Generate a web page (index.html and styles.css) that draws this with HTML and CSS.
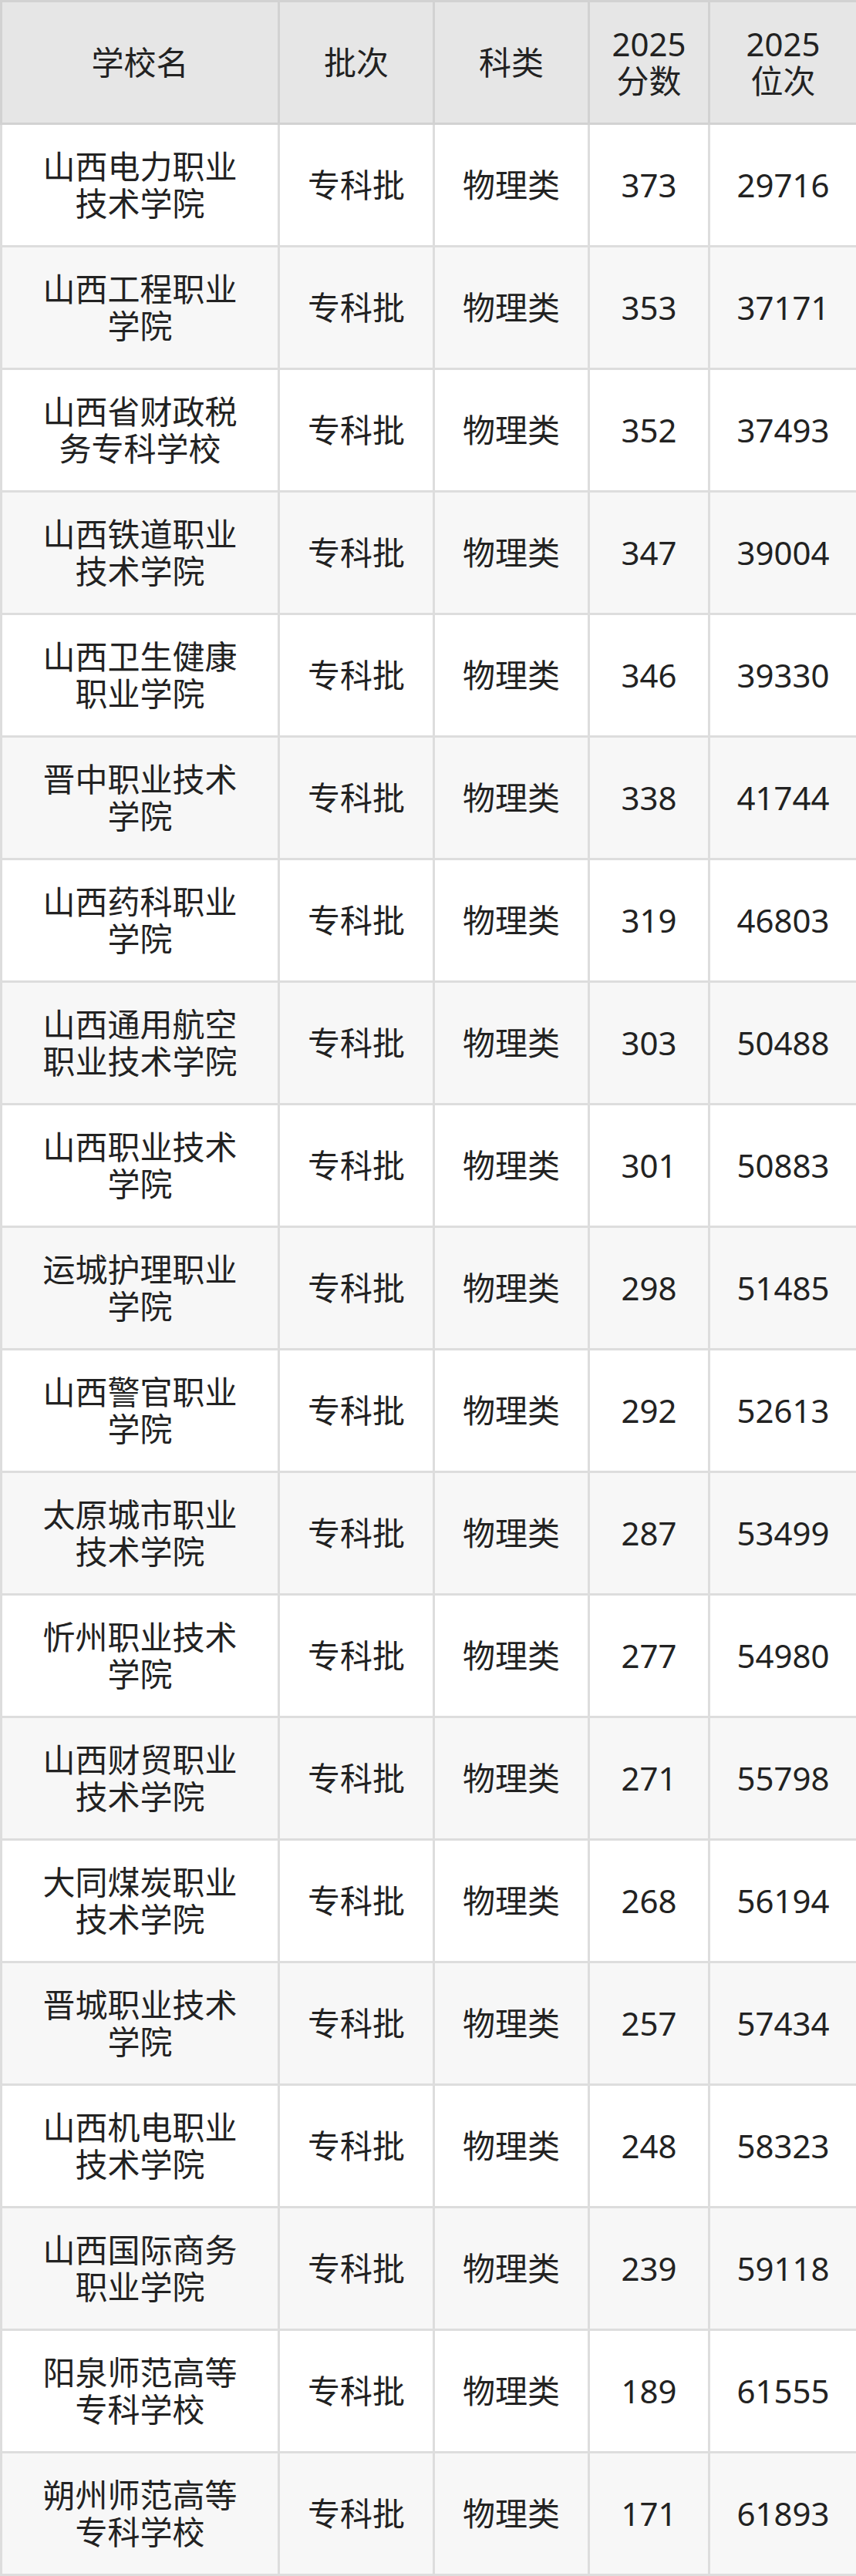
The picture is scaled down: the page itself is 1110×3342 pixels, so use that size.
FILE: index.html
```html
<!DOCTYPE html>
<html lang="zh-CN">
<head>
<meta charset="utf-8">
<title>山西专科批物理类</title>
<link rel="stylesheet" href="styles.css">
</head>
<body>
<table class="score-table">
  <colgroup>
    <col class="c-name"><col class="c-batch"><col class="c-type"><col class="c-score"><col class="c-rank">
  </colgroup>
  <thead>
    <tr><th>学校名</th><th>批次</th><th>科类</th><th>2025<br>分数</th><th>2025<br>位次</th></tr>
  </thead>
  <tbody>
    <tr><td>山西电力职业<br>技术学院</td><td>专科批</td><td>物理类</td><td>373</td><td>29716</td></tr>
    <tr><td>山西工程职业<br>学院</td><td>专科批</td><td>物理类</td><td>353</td><td>37171</td></tr>
    <tr><td>山西省财政税<br>务专科学校</td><td>专科批</td><td>物理类</td><td>352</td><td>37493</td></tr>
    <tr><td>山西铁道职业<br>技术学院</td><td>专科批</td><td>物理类</td><td>347</td><td>39004</td></tr>
    <tr><td>山西卫生健康<br>职业学院</td><td>专科批</td><td>物理类</td><td>346</td><td>39330</td></tr>
    <tr><td>晋中职业技术<br>学院</td><td>专科批</td><td>物理类</td><td>338</td><td>41744</td></tr>
    <tr><td>山西药科职业<br>学院</td><td>专科批</td><td>物理类</td><td>319</td><td>46803</td></tr>
    <tr><td>山西通用航空<br>职业技术学院</td><td>专科批</td><td>物理类</td><td>303</td><td>50488</td></tr>
    <tr><td>山西职业技术<br>学院</td><td>专科批</td><td>物理类</td><td>301</td><td>50883</td></tr>
    <tr><td>运城护理职业<br>学院</td><td>专科批</td><td>物理类</td><td>298</td><td>51485</td></tr>
    <tr><td>山西警官职业<br>学院</td><td>专科批</td><td>物理类</td><td>292</td><td>52613</td></tr>
    <tr><td>太原城市职业<br>技术学院</td><td>专科批</td><td>物理类</td><td>287</td><td>53499</td></tr>
    <tr><td>忻州职业技术<br>学院</td><td>专科批</td><td>物理类</td><td>277</td><td>54980</td></tr>
    <tr><td>山西财贸职业<br>技术学院</td><td>专科批</td><td>物理类</td><td>271</td><td>55798</td></tr>
    <tr><td>大同煤炭职业<br>技术学院</td><td>专科批</td><td>物理类</td><td>268</td><td>56194</td></tr>
    <tr><td>晋城职业技术<br>学院</td><td>专科批</td><td>物理类</td><td>257</td><td>57434</td></tr>
    <tr><td>山西机电职业<br>技术学院</td><td>专科批</td><td>物理类</td><td>248</td><td>58323</td></tr>
    <tr><td>山西国际商务<br>职业学院</td><td>专科批</td><td>物理类</td><td>239</td><td>59118</td></tr>
    <tr><td>阳泉师范高等<br>专科学校</td><td>专科批</td><td>物理类</td><td>189</td><td>61555</td></tr>
    <tr><td>朔州师范高等<br>专科学校</td><td>专科批</td><td>物理类</td><td>171</td><td>61893</td></tr>
  </tbody>
</table>
</body>
</html>
```

FILE: styles.css
```css
html, body {
  margin: 0;
  padding: 0;
  background: #ffffff;
}

.score-table {
  width: 1110px;
  border-collapse: collapse;
  table-layout: fixed;
  font-family: "Noto Sans", "Noto Sans CJK SC", sans-serif;
  font-size: 42px;
  line-height: 48px;
  color: #222222;
}

.c-name { width: 360px; }
.c-batch { width: 201px; }
.c-type { width: 201px; }
.c-score { width: 156px; }
.c-rank { width: 192px; }

.score-table th,
.score-table td {
  height: 156px;
  padding: 0;
  text-align: center;
  vertical-align: middle;
  box-sizing: content-box;
}

.score-table th {
  font-weight: normal;
  background: #e6e6e6;
  border: 3px solid #d2d2d2;
}

.score-table td {
  border: 3px solid #dddddd;
}

.score-table tbody tr:nth-child(odd) td {
  background: #ffffff;
}

.score-table tbody tr:nth-child(even) td {
  background: #f7f7f7;
}
```
